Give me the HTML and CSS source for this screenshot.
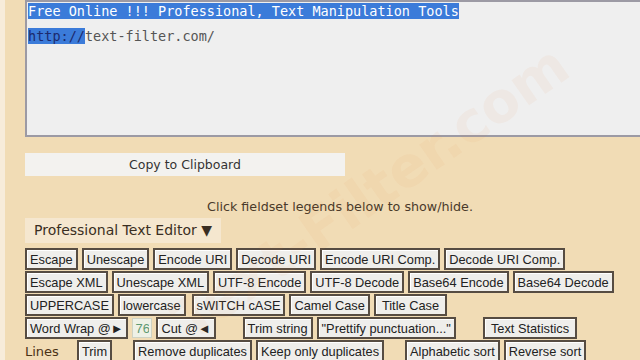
FILE: index.html
```html
<!DOCTYPE html>
<html lang="en">
<head>
  <meta charset="UTF-8" />
  <meta name="viewport" content="width=device-width, initial-scale=1.0" />
  <title>Text Filter</title>
  <link rel="stylesheet" href="styles.css">
</head>
<body>
  <div class="page">
    <div class="editor">
      <div class="line"><span class="sel">Free Online !!! Professional, Text Manipulation Tools </span></div>
      <div class="line second"><span class="sel dark">http://</span>text-filter.com/</div>
    </div>

    <button class="copy">Copy to Clipboard</button>

    <p class="hint">Click fieldset legends below to show/hide.</p>

    <div class="legend">Professional Text Editor &#9660;</div>

    <div class="tools">
      <div class="row">
        <button class="btn">Escape</button>
        <button class="btn">Unescape</button>
        <button class="btn">Encode URI</button>
        <button class="btn">Decode URI</button>
        <button class="btn">Encode URI Comp.</button>
        <button class="btn">Decode URI Comp.</button>
      </div>
      <div class="row">
        <button class="btn">Escape XML</button>
        <button class="btn">Unescape XML</button>
        <button class="btn">UTF-8 Encode</button>
        <button class="btn">UTF-8 Decode</button>
        <button class="btn">Base64 Encode</button>
        <button class="btn">Base64 Decode</button>
      </div>
      <div class="row">
        <button class="btn">UPPERCASE</button>
        <button class="btn">lowercase</button>
        <button class="btn push-s">sWITCH cASE</button>
        <button class="btn">Camel Case</button>
        <button class="btn wide">Title Case</button>
      </div>
      <div class="row">
        <button class="btn">Word Wrap @&#9658;</button>
        <input class="num" type="text" value="76" />
        <button class="btn">Cut @&#9668;</button>
        <button class="btn push-l">Trim string</button>
        <button class="btn">"Prettify punctuation..."</button>
        <button class="btn push-l wide">Text Statistics</button>
      </div>
      <div class="row">
        <span class="label">Lines</span>
        <button class="btn">Trim</button>
        <button class="btn push-m">Remove duplicates</button>
        <button class="btn">Keep only duplicates</button>
        <button class="btn push-m">Alphabetic sort</button>
        <button class="btn">Reverse sort</button>
      </div>
    </div>

    <div class="watermark">Text-Filter.com</div>
  </div>
</body>
</html>
```

FILE: styles.css
```css
body {
  margin: 0;
  background: #f1dcb5;
  font-family: "DejaVu Sans", sans-serif;
  overflow: hidden;
}
.page {
  position: relative;
  border-left: 5px solid #f7ecda;
  padding-left: 20px;
  height: 360px;
  box-sizing: border-box;
  overflow: hidden;
}
.editor {
  width: 630px;
  height: 137px;
  box-sizing: border-box;
  background: #efefef;
  border: 2px solid #9c9aa4;
  border-right: none;
  padding: 1px 0 0 1px;
  font-family: "DejaVu Sans Mono", monospace;
  font-size: 13.5px;
  color: #555;
}
.line {
  line-height: 17px;
}
.second {
  margin-top: 8px;
}
.sel {
  background: #3b7bd9;
  color: #fff;
}
.sel.dark {
  color: #1c2a6e;
}
.copy {
  display: block;
  margin: 16px 0 0 0;
  width: 320px;
  height: 23px;
  border: none;
  background: #f3f2ef;
  font-family: "DejaVu Sans", sans-serif;
  font-size: 12.5px;
  color: #333;
  padding: 0;
}
.hint {
  width: 630px;
  text-align: center;
  margin: 23px 0 0 0;
  font-size: 12.7px;
  line-height: 16px;
  color: #4a3a2a;
}
.legend {
  display: inline-block;
  margin-top: 3px;
  padding: 4px 9px 5px 9px;
  background: #f5e7cf;
  font-size: 14px;
  color: #3a2e22;
}
.tools {
  margin-top: 5px;
}
.row {
  display: flex;
  align-items: center;
  gap: 4px;
  height: 22px;
  margin-bottom: 1px;
}
.btn {
  height: 22px;
  padding: 0 3px;
  border: 2px solid #564c42;
  box-shadow: inset 1px 1px 0 #fff;
  background: #efeeeb;
  font-family: "Liberation Sans", Arial, sans-serif;
  font-size: 12.8px;
  color: #222;
  white-space: nowrap;
}
.btn.wide {
  padding: 0 6px;
}
.push-s {
  margin-left: 2px;
}
.push-m {
  margin-left: 17px;
}
.push-l {
  margin-left: 23px;
}
.num {
  width: 20px;
  height: 20px;
  box-sizing: border-box;
  padding: 0 2px;
  border: 1px solid #cfd3c4;
  background: #eef1e6;
  font-family: "Liberation Sans", Arial, sans-serif;
  font-size: 13px;
  color: #5f9a72;
}
.label {
  width: 48px;
  font-size: 13px;
  color: #4a3216;
}
.watermark {
  position: absolute;
  left: 132px;
  top: 160px;
  transform: rotate(-35deg);
  font-family: "DejaVu Sans", sans-serif;
  font-weight: bold;
  font-size: 56px;
  color: rgba(240, 130, 60, 0.06);
  pointer-events: none;
  white-space: nowrap;
}
```
